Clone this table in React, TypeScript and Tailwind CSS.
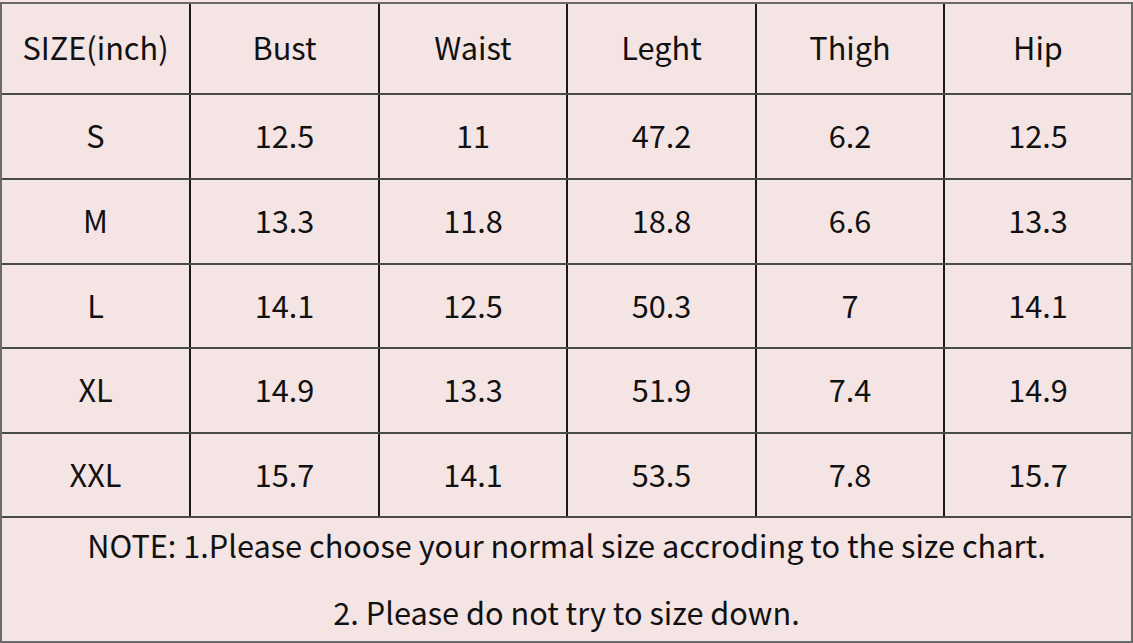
import React from "react";

const header = ["SIZE(inch)", "Bust", "Waist", "Leght", "Thigh", "Hip"];
const rows = [
  ["S", "12.5", "11", "47.2", "6.2", "12.5"],
  ["M", "13.3", "11.8", "18.8", "6.6", "13.3"],
  ["L", "14.1", "12.5", "50.3", "7", "14.1"],
  ["XL", "14.9", "13.3", "51.9", "7.4", "14.9"],
  ["XXL", "15.7", "14.1", "53.5", "7.8", "15.7"],
];
const heights = ["h-[85px]", "h-[85px]", "h-[84px]", "h-[85px]", "h-[84px]"];

function Row({ cells, h }: { cells: string[]; h: string }) {
  return (
    <div
      className={`grid grid-cols-[189px_189px_188px_189px_188px_1fr] shrink-0 border-b-2 border-[#4a4a4a] ${h}`}
    >
      {cells.map((c, i) => (
        <div
          key={i}
          className={`flex items-center justify-center pb-[3px] ${i < 5 ? "border-r-2 border-[#1a1a1a]" : ""}`}
        >
          {c}
        </div>
      ))}
    </div>
  );
}

export default function App() {
  return (
    <div
      className="w-[1133px] h-[643px] bg-[#f4e4e4] pt-[2px] text-[#111] text-[30.7px] leading-[40px]"
      style={{ fontFamily: '"Noto Sans CJK SC", "Noto Sans", sans-serif' }}
    >
      <div className="w-[1133px] h-[641px] border-2 border-[#6a6a6a] flex flex-col overflow-hidden">
        <Row cells={header} h="h-[91px]" />
        {rows.map((r, i) => (
          <Row key={i} cells={r} h={heights[i]} />
        ))}
        <div className="flex-1 flex flex-col items-center pt-[7px]">
          <div className="h-[40px]">
            NOTE: 1.Please choose your normal size accroding to the size chart.
          </div>
          <div className="h-[40px] mt-[27px]">2. Please do not try to size down.</div>
        </div>
      </div>
    </div>
  );
}
